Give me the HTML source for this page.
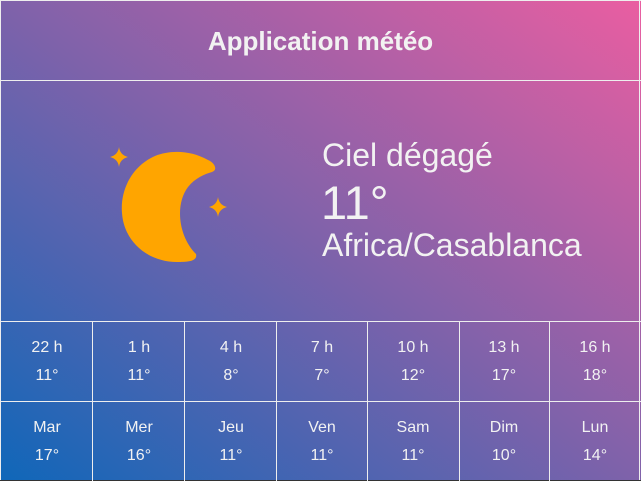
<!DOCTYPE html>
<html><head><meta charset="utf-8"><style>
*{margin:0;padding:0;box-sizing:border-box}
body{width:641px;height:481px;overflow:hidden;font-family:"Liberation Sans",sans-serif;color:#f2f2f2;
background:linear-gradient(to top right,#0f67b9 0%,#7f62aa 50%,#ea5ea1 100%);position:relative}
.l{position:absolute;background:#eee}
.t{position:absolute;text-align:center;font-size:16px;width:92px;line-height:28px}
</style></head><body>
<div class="l" style="left:0;top:0;width:641px;height:1px"></div>
<div class="l" style="left:0;top:0;width:1px;height:481px"></div>
<div class="l" style="left:639px;top:0;width:1px;height:481px"></div>
<div class="l" style="left:0;top:80px;width:641px;height:1px"></div>
<div class="l" style="left:0;top:321px;width:641px;height:1px"></div>
<div class="l" style="left:0;top:401px;width:641px;height:1px"></div>
<div class="l" style="left:0;top:480px;width:641px;height:1px;background:#333"></div>
<div class="l" style="left:92px;top:321px;width:1px;height:160px"></div>
<div class="l" style="left:184px;top:321px;width:1px;height:160px"></div>
<div class="l" style="left:276px;top:321px;width:1px;height:160px"></div>
<div class="l" style="left:367px;top:321px;width:1px;height:160px"></div>
<div class="l" style="left:459px;top:321px;width:1px;height:160px"></div>
<div class="l" style="left:549px;top:321px;width:1px;height:160px"></div>
<div style="position:absolute;left:0;width:641px;top:26px;text-align:center;font-weight:bold;font-size:26px">Application météo</div>
<svg style="position:absolute;left:0;top:0" width="641" height="321">
<path fill="#ffa500" d="M208 160 C190 150 170 150 155 156 C132 166 120 190 122 213 C124 242 148 262 177 262 C186 262 198 262 196 254 C178 236 175 204 188 187 C195 178 205 174 212 172 C218 170 215 163 208 160 Z"/>
<path fill="#ffa500" d="M119 147 Q120 155 128 157 Q120 159 119 167 Q118 159 110 157 Q118 155 119 147Z"/>
<path fill="#ffa500" d="M218 197 Q219 205 227 207 Q219 209 218 217 Q217 209 209 207 Q217 205 218 197Z"/>
</svg>
<div style="position:absolute;left:322px;top:137px;font-size:32px">Ciel dégagé</div>
<div style="position:absolute;left:321px;top:175px;font-size:47px">11°</div>
<div style="position:absolute;left:322px;top:227px;font-size:32px">Africa/Casablanca</div>
<div class="t" style="left:1px;top:334px">22 h<br>11°</div>
<div class="t" style="left:93px;top:334px">1 h<br>11°</div>
<div class="t" style="left:185px;top:334px">4 h<br>8°</div>
<div class="t" style="left:276px;top:334px">7 h<br>7°</div>
<div class="t" style="left:367px;top:334px">10 h<br>12°</div>
<div class="t" style="left:458px;top:334px">13 h<br>17°</div>
<div class="t" style="left:549px;top:334px">16 h<br>18°</div>
<div class="t" style="left:1px;top:414px">Mar<br>17°</div>
<div class="t" style="left:93px;top:414px">Mer<br>16°</div>
<div class="t" style="left:185px;top:414px">Jeu<br>11°</div>
<div class="t" style="left:276px;top:414px">Ven<br>11°</div>
<div class="t" style="left:367px;top:414px">Sam<br>11°</div>
<div class="t" style="left:458px;top:414px">Dim<br>10°</div>
<div class="t" style="left:549px;top:414px">Lun<br>14°</div>
</body></html>
